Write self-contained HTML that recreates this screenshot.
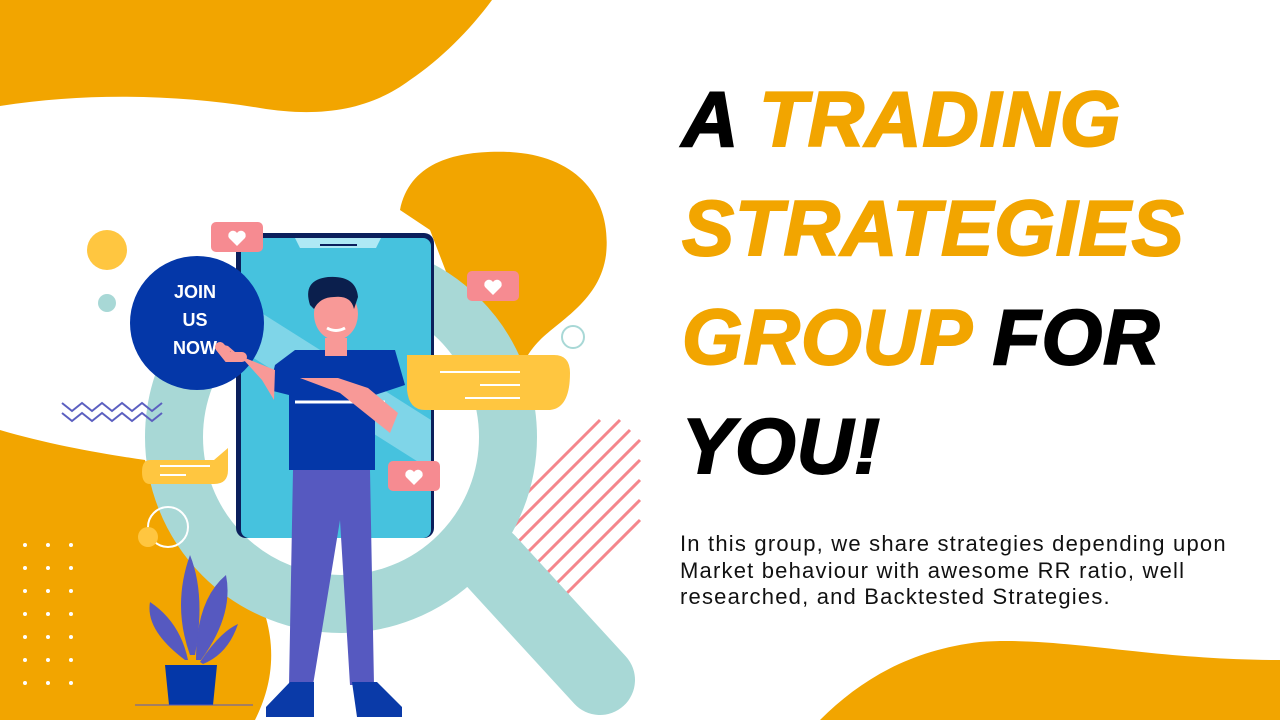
<!DOCTYPE html>
<html><head><meta charset="utf-8"><style>
body{margin:0;width:1280px;height:720px;overflow:hidden;background:#fff;position:relative;font-family:"Liberation Sans",sans-serif}
svg{position:absolute;left:0;top:0}
.h{position:absolute;left:682px;font-weight:900;font-style:italic;font-size:78px;letter-spacing:1px;line-height:1;color:#000;white-space:nowrap;-webkit-text-stroke:2px currentColor}
.o{color:#f2a500}
p{position:absolute;left:680px;top:531px;margin:0;font-size:22px;letter-spacing:1.2px;line-height:26.5px;color:#111;white-space:nowrap}
</style></head><body>
<svg width="1280" height="720" viewBox="0 0 1280 720">
<path d="M0 0H492C470 30 440 60 410 80C370 110 320 118 260 108C180 95 90 92 0 106Z" fill="#f2a500"/>
<path d="M0 430C50 445 110 455 145 460C160 520 210 560 260 600C280 650 270 690 255 720H0Z" fill="#f2a500"/>
<path d="M820 720C860 680 910 650 980 642C1060 636 1150 660 1280 660V720Z" fill="#f2a500"/>
<path d="M400 210C410 160 460 150 510 152C580 156 612 200 606 255C600 300 560 320 540 340C525 355 520 370 515 385L480 360L430 230Z" fill="#f2a500"/>
<g stroke="#f4868c" stroke-width="3">
<path d="M520 560L640 440M515 585L640 460M520 600L640 480M540 600L640 500M560 600L640 520M500 560L630 430M500 540L620 420M510 510L600 420"/>
</g>
<circle cx="341" cy="437" r="167" fill="none" stroke="#a8d8d6" stroke-width="58"/>
<path d="M490 560L600 680" stroke="#a8d8d6" stroke-width="70" stroke-linecap="round"/>
<circle cx="107" cy="250" r="20" fill="#ffc640"/>
<circle cx="107" cy="303" r="9" fill="#a8d8d6"/>
<circle cx="573" cy="337" r="11" fill="none" stroke="#a8d8d6" stroke-width="2"/>
<circle cx="168" cy="527" r="20" fill="none" stroke="#fff" stroke-width="2"/>
<circle cx="148" cy="537" r="10" fill="#ffc640"/>
<path d="M62 403l10 8 10-8 10 8 10-8 10 8 10-8 10 8 10-8 10 8 10-8M62 413l10 8 10-8 10 8 10-8 10 8 10-8 10 8 10-8 10 8 10-8" fill="none" stroke="#5b5fc0" stroke-width="2"/>
<g fill="#fff"><circle cx="25" cy="545" r="2"/><circle cx="48" cy="545" r="2"/><circle cx="71" cy="545" r="2"/><circle cx="25" cy="568" r="2"/><circle cx="48" cy="568" r="2"/><circle cx="71" cy="568" r="2"/><circle cx="25" cy="591" r="2"/><circle cx="48" cy="591" r="2"/><circle cx="71" cy="591" r="2"/><circle cx="25" cy="614" r="2"/><circle cx="48" cy="614" r="2"/><circle cx="71" cy="614" r="2"/><circle cx="25" cy="637" r="2"/><circle cx="48" cy="637" r="2"/><circle cx="71" cy="637" r="2"/><circle cx="25" cy="660" r="2"/><circle cx="48" cy="660" r="2"/><circle cx="71" cy="660" r="2"/><circle cx="25" cy="683" r="2"/><circle cx="48" cy="683" r="2"/><circle cx="71" cy="683" r="2"/></g>
<rect x="236" y="233" width="198" height="305" rx="10" fill="#0b1f5c"/>
<rect x="241" y="238" width="190" height="300" rx="8" fill="#46c2de"/>
<path d="M241 300L431 420V470L241 350Z" fill="#7fd5e8"/>
<path d="M295 238h86l-5 10h-76z" fill="#aee9f5"/>
<rect x="320" y="244" width="37" height="2" fill="#0b1f5c"/>
<path d="M404 355h150q16 0 16 18v0q0 35-20 37h-125q-16 0-18-20v-35z" fill="#ffc640"/>
<path d="M440 372h80M480 385h40M465 398h55" stroke="#fff" stroke-width="2"/>
<path d="M150 460h64l14-12v22q0 14-14 14h-64q-8 0-8-12t8-12z" fill="#ffc640"/>
<path d="M160 466h50M160 475h26" stroke="#fff" stroke-width="2"/>
<g fill="#f68b91"><rect x="211" y="222" width="52" height="30" rx="5"/><rect x="467" y="271" width="52" height="30" rx="5"/><rect x="388" y="461" width="52" height="30" rx="5"/></g>
<g fill="#fff"><path d="M237 246l-8-8a4.5 4.5 0 0 1 8-5 4.5 4.5 0 0 1 8 5z"/><path d="M493 295l-8-8a4.5 4.5 0 0 1 8-5 4.5 4.5 0 0 1 8 5z"/><path d="M414 485l-8-8a4.5 4.5 0 0 1 8-5 4.5 4.5 0 0 1 8 5z"/></g>
<circle cx="197" cy="323" r="67" fill="#0437a8"/>
<g font-family="Liberation Sans" font-weight="bold" font-size="18" fill="#fff" text-anchor="middle"><text x="195" y="298">JOIN</text><text x="195" y="326">US</text><text x="195" y="354">NOW</text></g>
<path d="M293 470l-4 215h24l27-165 10 165h24l-4-215z" fill="#5659c0"/>
<path d="M290 682l-24 25v10h48v-35zM352 682l5 35h45v-10l-25-25z" fill="#0a3aa8"/>
<path d="M275 365l20-15h100l10 35-30 10v75h-86v-75l-20-5z" fill="#0437a8"/>
<path d="M295 402h90" stroke="#fff" stroke-width="3"/>
<path d="M275 370l-45-18-10-8 8 2 14 12 20 22 12 20z" fill="#f89997"/>
<path d="M220 347l8 10 14 0" stroke="#f89997" stroke-width="10" stroke-linecap="round"/>
<path d="M300 378l40 15 50 40 8-20-30-25-30-10z" fill="#f89997"/>
<path d="M325 338h22v18h-22z" fill="#f89997"/>
<ellipse cx="336" cy="314" rx="22" ry="26" fill="#f89997"/>
<path d="M310 305q-8-25 18-28 28-2 30 20l-4 12q-3-14-20-12-14 0-20 12z" fill="#0b1f4d"/>
<path d="M327 328q9 5 18 0" stroke="#fff" stroke-width="3" fill="none"/>
<path d="M165 665h52l-4 40h-44z" fill="#0437a8"/>
<g fill="#5659c0"><path d="M190 655q-18-50 0-100 16 40 5 100z"/><path d="M196 660q0-60 30-85 8 40-25 85z"/><path d="M185 660q-40-30-35-58 30 20 38 58z"/><path d="M200 662q20-30 38-38-10 30-35 40z"/></g>
<path d="M135 705h118" stroke="#5659c0" stroke-width="1"/>
</svg>
<div class="h" style="top:80px">A <span class="o">TRADING</span></div>
<div class="h o" style="top:189px">STRATEGIES</div>
<div class="h" style="top:298px"><span class="o">GROUP</span> FOR</div>
<div class="h" style="top:407px">YOU!</div>
<p>In this group, we share strategies depending upon<br>Market behaviour with awesome RR ratio, well<br>researched, and Backtested Strategies.</p>
</body></html>
